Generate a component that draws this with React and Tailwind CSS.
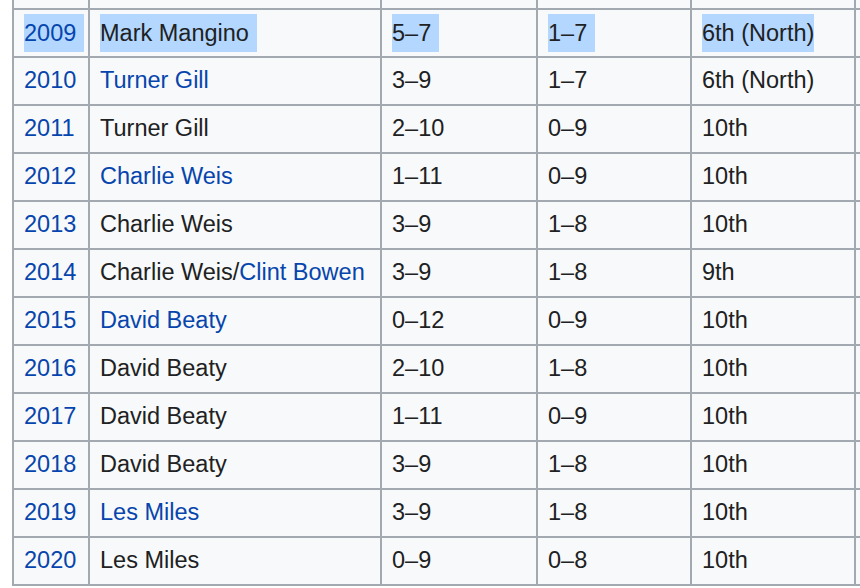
import React from "react";

const rows = [
  ["2009", [["Mark Mangino", false]], "5–7", "1–7", "6th (North)"],
  ["2010", [["Turner Gill", true]], "3–9", "1–7", "6th (North)"],
  ["2011", [["Turner Gill", false]], "2–10", "0–9", "10th"],
  ["2012", [["Charlie Weis", true]], "1–11", "0–9", "10th"],
  ["2013", [["Charlie Weis", false]], "3–9", "1–8", "10th"],
  ["2014", [["Charlie Weis/", false], ["Clint Bowen", true]], "3–9", "1–8", "9th"],
  ["2015", [["David Beaty", true]], "0–12", "0–9", "10th"],
  ["2016", [["David Beaty", false]], "2–10", "1–8", "10th"],
  ["2017", [["David Beaty", false]], "1–11", "0–9", "10th"],
  ["2018", [["David Beaty", false]], "3–9", "1–8", "10th"],
  ["2019", [["Les Miles", true]], "3–9", "1–8", "10th"],
  ["2020", [["Les Miles", false]], "0–9", "0–8", "10th"],
];

const cols = "grid grid-cols-[76px_292px_156px_154px_164px_40px]";
const cell = "border-r-2 border-[#a2a9b1] pl-[10px] flex items-center whitespace-nowrap";

function Sel({ on, last, children }) {
  if (!on) return <span>{children}</span>;
  return (
    <span className={`inline-block bg-[#b3d7ff] h-[38px] leading-[38px] ${last ? "" : "pr-[8px]"}`}>
      {children}
    </span>
  );
}

export default function App() {
  return (
    <div
      className="w-[860px] h-[588px] overflow-hidden bg-white"
      style={{ fontFamily: '"Liberation Sans", Arial, sans-serif' }}
    >
      <div className="ml-[12px] w-[900px] border-l-2 border-[#a2a9b1] bg-[#f8f9fa] text-[23.5px] text-[#202122]">
        <div className={`${cols} h-[8px]`}>
          {[0, 1, 2, 3, 4].map((i) => (
            <div key={i} className="border-r-2 border-[#a2a9b1]" />
          ))}
          <div />
        </div>
        {rows.map(([year, coach, ov, conf, fin], idx) => {
          const sel = idx === 0;
          return (
            <div key={year} className={`${cols} h-[48px] border-t-2 border-[#a2a9b1]`}>
              <div className={cell}>
                <Sel on={sel}>
                  <span className="text-[#0645ad]">{year}</span>
                </Sel>
              </div>
              <div className={cell}>
                <Sel on={sel}>
                  {coach.map(([t, link], j) => (
                    <span key={j} className={link ? "text-[#0645ad]" : ""}>
                      {t}
                    </span>
                  ))}
                </Sel>
              </div>
              <div className={cell}>
                <Sel on={sel}>{ov}</Sel>
              </div>
              <div className={cell}>
                <Sel on={sel}>{conf}</Sel>
              </div>
              <div className={cell}>
                <Sel on={sel} last>
                  {fin}
                </Sel>
              </div>
              <div />
            </div>
          );
        })}
        <div className="h-[2px] bg-[#a2a9b1]" />
      </div>
    </div>
  );
}
